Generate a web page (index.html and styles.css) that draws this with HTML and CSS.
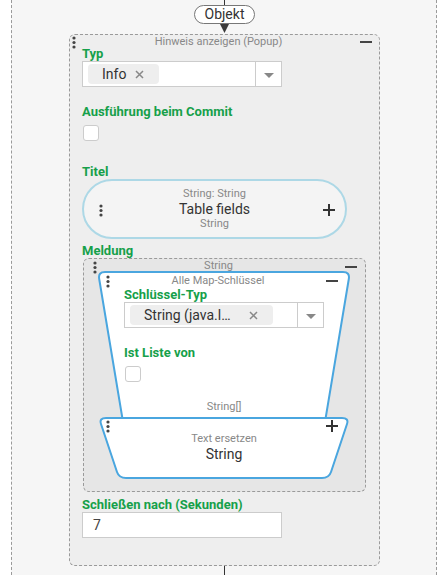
FILE: index.html
```html
<!DOCTYPE html>
<html lang="de">
<head>
<meta charset="utf-8">
<title>Hinweis anzeigen</title>
<link rel="stylesheet" href="styles.css">
</head>
<body>
<div class="canvas">
  <div class="wire wire-top"></div>
  <div class="type-pill">Objekt</div>
  <svg class="arrow" width="9" height="9" viewBox="0 0 9 9"><polygon points="0,0 9,0 4.5,9" fill="#3a3a3a"/></svg>

  <div class="block main">
    <svg class="dots d-main" width="4" height="13" viewBox="0 0 4 13"><circle cx="2" cy="2" r="1.6"/><circle cx="2" cy="6.5" r="1.6"/><circle cx="2" cy="11" r="1.6"/></svg>
    <div class="minus m-main"></div>
    <div class="title">Hinweis anzeigen (Popup)</div>

    <div class="label">Typ</div>
    <div class="select">
      <div class="chip-area">
        <div class="chip chip-info"><span>Info</span><svg class="x" width="9" height="9" viewBox="0 0 9 9"><path d="M1 1 L8 8 M8 1 L1 8" stroke="#888" stroke-width="1.5"/></svg></div>
      </div>
      <div class="drop"><svg width="10" height="5" viewBox="0 0 10 5"><polygon points="0,0 10,0 5,5" fill="#888"/></svg></div>
    </div>

    <div class="label gap-18">Ausführung beim Commit</div>
    <div class="check"></div>

    <div class="label gap-24">Titel</div>
    <div class="value-pill">
      <svg class="dots d-pill" width="4" height="13" viewBox="0 0 4 13"><circle cx="2" cy="2" r="1.6"/><circle cx="2" cy="6.5" r="1.6"/><circle cx="2" cy="11" r="1.6"/></svg>
      <svg class="plus p-pill" width="12" height="12" viewBox="0 0 12 12"><path d="M6 0 V12 M0 6 H12" stroke="#333" stroke-width="2"/></svg>
      <div class="small">String: String</div>
      <div class="big">Table fields</div>
      <div class="small">String</div>
    </div>

    <div class="label gap-5">Meldung</div>
    <div class="block list">
      <svg class="dots d-list" width="4" height="13" viewBox="0 0 4 13"><circle cx="2" cy="2" r="1.6"/><circle cx="2" cy="6.5" r="1.6"/><circle cx="2" cy="11" r="1.6"/></svg>
      <div class="minus m-list"></div>
      <div class="title">String</div>

      <div class="map">
        <svg class="shape" width="254" height="209" viewBox="0 0 254 209"><path d="M8 1 H246 Q253 1 251.8 8 L224 175 H30 L2.2 8 Q1 1 8 1 Z" fill="#fff" stroke="#4aa6df" stroke-width="2"/></svg>
        <svg class="dots d-map" width="4" height="13" viewBox="0 0 4 13"><circle cx="2" cy="2" r="1.6"/><circle cx="2" cy="6.5" r="1.6"/><circle cx="2" cy="11" r="1.6"/></svg>
        <div class="minus m-map"></div>
        <div class="map-title">Alle Map-Schlüssel</div>
        <div class="map-fields">
          <div class="label gap-1">Schlüssel-Typ</div>
          <div class="select">
            <div class="chip-area">
              <div class="chip chip-str"><span>String (java.l…</span><svg class="x" width="9" height="9" viewBox="0 0 9 9"><path d="M1 1 L8 8 M8 1 L1 8" stroke="#888" stroke-width="1.5"/></svg></div>
            </div>
            <div class="drop"><svg width="10" height="5" viewBox="0 0 10 5"><polygon points="0,0 10,0 5,5" fill="#888"/></svg></div>
          </div>
          <div class="label gap-18">Ist Liste von</div>
          <div class="check"></div>
        </div>
        <div class="slot-label">String[]</div>

        <div class="slot">
          <svg class="shape" width="252" height="64" viewBox="0 0 252 64"><path d="M8 2 H244 Q251 2 249 8 L233 56 Q231 62 224 62 H28 Q21 62 19 56 L3 8 Q1 2 8 2 Z" fill="#fff" stroke="#4aa6df" stroke-width="2"/></svg>
          <svg class="dots d-slot" width="4" height="13" viewBox="0 0 4 13"><circle cx="2" cy="2" r="1.6"/><circle cx="2" cy="6.5" r="1.6"/><circle cx="2" cy="11" r="1.6"/></svg>
          <svg class="plus p-slot" width="12" height="12" viewBox="0 0 12 12"><path d="M6 0 V12 M0 6 H12" stroke="#333" stroke-width="2"/></svg>
          <div class="small">Text ersetzen</div>
          <div class="big slot-big">String</div>
        </div>
      </div>
    </div>

    <div class="label gap-6">Schließen nach (Sekunden)</div>
    <div class="input">7</div>
  </div>

  <div class="wire wire-bottom"></div>
</div>
</body>
</html>
```

FILE: styles.css
```css
html, body {
  margin: 0;
  padding: 0;
  background: #ffffff;
  font-family: Roboto, "Liberation Sans", sans-serif;
  overflow: hidden;
}

.canvas {
  margin-left: 11px;
  width: 426px;
  height: 575px;
  box-sizing: border-box;
  border-left: 1px dashed #9a9a9a;
  border-right: 1px dashed #9a9a9a;
  background: #f6f6f6;
  display: flex;
  flex-direction: column;
  align-items: flex-start;
}

.wire {
  width: 1px;
  background: #333;
  margin-left: 212px;
  flex: none;
}
.wire-top { height: 5px; }
.wire-bottom { height: 9px; }

.type-pill {
  margin-left: 182px;
  box-sizing: border-box;
  width: 61px;
  height: 19px;
  border: 1px solid #777;
  border-radius: 10px;
  background: #fff;
  font-size: 14px;
  line-height: 17px;
  text-align: center;
  color: #333;
  flex: none;
}

.arrow {
  display: block;
  margin-left: 208px;
  flex: none;
}

.block {
  position: relative;
  box-sizing: border-box;
  border: 1px dashed #9a9a9a;
  border-radius: 6px;
}

.main {
  margin-top: 1px;
  margin-left: 57px;
  width: 311px;
  height: 532px;
  background: #eeeeee;
  padding: 0 12px;
  flex: none;
}

.title {
  font-size: 11px;
  color: #888;
  text-align: center;
  line-height: 14px;
  height: 12px;
  padding-right: 12px;
  white-space: nowrap;
}

.label {
  color: #16a04a;
  font-weight: 700;
  font-size: 13px;
  line-height: 14px;
  white-space: nowrap;
}
.gap-1 { margin-top: 1px; }
.gap-5 { margin-top: 5px; }
.gap-6 { margin-top: 6px; }
.gap-18 { margin-top: 18px; }
.gap-24 { margin-top: 24px; }

.dots {
  position: absolute;
  fill: #444;
}
.d-main { left: 2px; top: 1px; }
.d-pill { left: 15px; top: 23px; }
.d-list { left: 9px; top: 2px; }
.d-map { left: 9px; top: 4px; }
.d-slot { left: 8px; top: 4px; }

.minus {
  position: absolute;
  width: 12px;
  height: 2px;
  background: #444;
}
.m-main { right: 7px; top: 6px; }
.m-list { right: 8px; top: 7px; }
.m-map { right: 13px; top: 9px; }

.plus { position: absolute; }
.p-pill { right: 10px; top: 23px; }
.p-slot { left: 228px; top: 4px; }

.select {
  display: flex;
  box-sizing: border-box;
  width: 200px;
  height: 26px;
  border: 1px solid #ccc;
  background: #fff;
}
.chip-area {
  flex: 1;
  padding: 2px 5px;
}
.chip {
  box-sizing: border-box;
  height: 20px;
  border-radius: 4px;
  background: #eeeeee;
  display: flex;
  align-items: center;
  padding: 0 15px 0 14px;
  font-size: 14px;
  color: #333;
  white-space: nowrap;
}
.chip-info { width: 71px; }
.chip-str { width: 143px; }
.chip .x { margin-left: auto; flex: none; }

.drop {
  width: 26px;
  box-sizing: border-box;
  border-left: 1px solid #ccc;
  display: flex;
  align-items: center;
  justify-content: center;
  padding-top: 3px;
}

.check {
  width: 16px;
  height: 16px;
  box-sizing: border-box;
  border: 1px solid #ccc;
  border-radius: 3px;
  background: #fff;
  margin-left: 1px;
  margin-top: 6px;
}

.value-pill {
  position: relative;
  box-sizing: border-box;
  width: 265px;
  height: 60px;
  border: 2px solid #add8e6;
  border-radius: 30px;
  background: #f4f4f4;
  display: flex;
  flex-direction: column;
  align-items: center;
  justify-content: center;
  gap: 1px;
}

.small {
  font-size: 11px;
  line-height: 12px;
  color: #888;
}
.big {
  font-size: 14px;
  line-height: 16px;
  color: #333;
}

.list {
  margin-left: 1px;
  width: 283px;
  height: 234px;
  background: #e6e6e6;
}

.map {
  position: relative;
  z-index: 0;
  margin-left: 13px;
  width: 254px;
  height: 209px;
}
.shape {
  position: absolute;
  left: 0;
  top: 0;
  z-index: -1;
}
.map-title {
  padding-top: 4px;
  font-size: 11px;
  line-height: 12px;
  color: #888;
  text-align: center;
  padding-right: 12px;
}
.map-fields {
  padding-left: 27px;
}
.slot-label {
  margin-top: 19px;
  font-size: 11px;
  line-height: 12px;
  color: #888;
  text-align: center;
}

.slot {
  position: relative;
  z-index: 0;
  margin-top: 3px;
  margin-left: 1px;
  width: 252px;
  height: 64px;
  box-sizing: border-box;
  padding-top: 17px;
  text-align: center;
}
.slot-big { margin-top: 1px; }

.input {
  box-sizing: border-box;
  width: 200px;
  height: 26px;
  border: 1px solid #ccc;
  background: #fff;
  padding-left: 10px;
  font-size: 14px;
  line-height: 24px;
  color: #444;
}
```
